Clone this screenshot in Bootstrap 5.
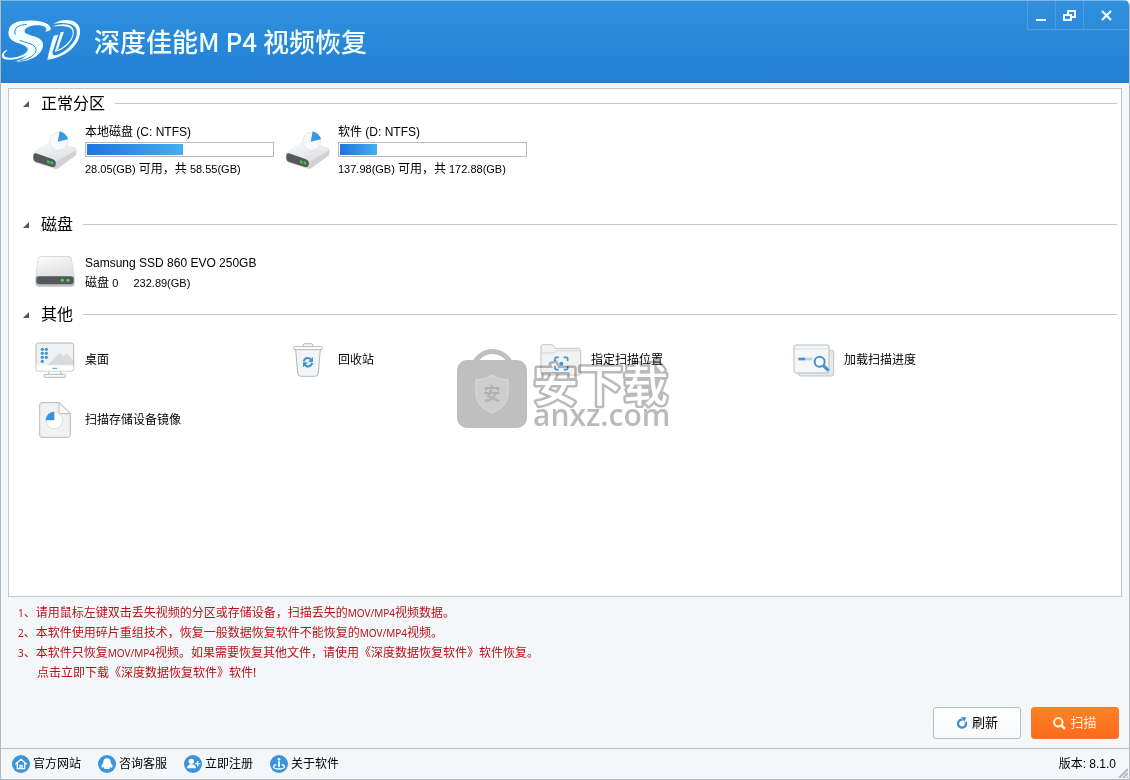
<!DOCTYPE html>
<html lang="zh-CN">
<head>
<meta charset="utf-8">
<meta name="viewport" content="width=device-width, initial-scale=1">
<title>深度佳能MP4视频恢复</title>
<link href="https://cdn.jsdelivr.net/npm/bootstrap@5.3.0/dist/css/bootstrap.min.css" rel="stylesheet">
<style>
body{font-family:"Liberation Sans","Noto Sans CJK SC",sans-serif;font-size:12px;line-height:20px;color:#000;background:#fff}
.app-window{min-height:100vh;background:#f4f7fa;border:1px solid #b4b9be;border-top:0;border-radius:0 6px 0 0;overflow:hidden}
.title-bar{height:83px;background:linear-gradient(#3090dd,#2380d5);border-top:1px solid #7ab9ea;color:#f2ffff}
.title-bar h1{font:500 26px/36px "Noto Sans CJK SC",sans-serif;padding:0 0 2px 11px}
.win-controls{height:29px;border:1px solid #4a9fe3;border-width:0 0 1px 1px}
.win-controls button{width:28px;background:none;border:0;border-right:1px solid #4a9fe3;padding:0;color:#f2ffff}
.win-controls button:last-child{width:45px;border-right:0}
.source-panel{background:#fff;border:1px solid #c3c7ca;margin:5px 7px 0;padding:4px 4px 0 13px}
.section-title{font:400 16px/18px "Noto Sans CJK SC",sans-serif;height:20px;gap:10px}
.section-title svg{margin-right:2px}
.section-title .label-text{padding-bottom:2px}
.section-title .rule{height:1px;background:#c6c6c6}
.tiles{display:grid;grid-template-columns:repeat(auto-fill,253px);padding-left:11px}
.tile{display:flex;align-items:center;background:none;border:0;padding:0;color:#000;text-align:left;height:60px}
.tile .icon-box{width:44px;margin-right:8px;flex:none;text-align:center}
.tile svg{display:block;margin:auto}
.tiles-part{padding-top:7px;margin-bottom:34px}
.tiles-disk{padding-top:9px;margin-bottom:1px}
.tiles-disk .icon-box{padding-bottom:4px}
.tiles-other{padding-top:6px}
.size-text{font-size:11px}
.size-text span{font-size:12px}
.usage{width:189px;height:15px;border:1px solid #b9b9b9;border-radius:0;background:#fff;padding:1px;margin-bottom:2px}
.usage .progress-bar{background:linear-gradient(90deg,#1f74df,#45aef0)}
.notes{padding:6px 17px 0;color:#b81414;font-family:"Noto Sans","Noto Sans CJK SC",sans-serif}
.notes span{font-size:10px}
.notes a{color:inherit;text-decoration:none;margin-left:19px}
.actions{padding:24px 10px 9px;gap:10px}
.actions .btn{width:88px;height:32px;border-radius:3px;font-size:13px;line-height:20px;padding:0;border:1px solid #b9bdc1;background:linear-gradient(#fff,#f8f9fa);color:#000;gap:4px}
.actions .btn-scan{background:linear-gradient(#ff8226,#fb6a1b);border-color:#f77a2c;color:#fff3e0}
.status-bar{border-top:1px solid #b4b9be;height:31px;padding:0 13px 0 11px;position:relative}
.status-bar a{color:#000;text-decoration:none;gap:3px}
.links{gap:17px}
.grip{position:absolute;right:1px;bottom:1px}
.watermark{position:absolute;left:50%;top:50%;width:216px;height:88px;transform:translate(-50%,-50%);opacity:.9;pointer-events:none;overflow:visible;mix-blend-mode:multiply}
</style>
</head>
<body>
<div class="app-window d-flex flex-column position-relative">
<header class="title-bar d-flex justify-content-between">
  <div class="d-flex align-items-center">
    <svg width="82" height="46" viewBox="3 3 246 138" fill="#f2ffff">
      <path d="M152 29C145 10 105 4 62 9C30 14 16 45 33 64C44 75 73 79 83 90C94 104 74 123 45 130C103 134 138 97 127 71C119 52 76 53 74 41C72 28 96 20 117 22C135 23 145 32 136 41C148 39 154 36 152 29Z"/>
      <path d="M34 61C25 40 44 20 77 20L116 13C80 5 37 7 28 31C21 51 36 69 56 74C71 78 86 86 83 97C78 109 51 122 26 119C13 118 10 112 13 106L23 96C7 96 0 118 12 123C46 132 94 111 99 94C105 73 47 77 34 61Z"/>
      <path d="M46 50C38 27 60 21 80 19M59 67C80 75 105 77 108 94C111 109 85 124 60 128" fill="none" stroke="#2a88d9" stroke-width="3"/>
      <path d="M161 53L175 50L158 101C155 113 166 115 182 106C221 85 244 43 222 24C206 11 177 15 159 17L180 8C211 2 236 10 240 35C244 78 199 118 142 125C147 100 154 75 161 53Z"/>
      <path d="M182 43L192 41L173 96C209 80 229 46 212 31C199 22 174 23 157 25C184 15 211 16 219 31C230 57 202 94 164 102Z"/>
    </svg>
    <h1 class="mb-0">深度佳能M P4 视频恢复</h1>
  </div>
  <div class="win-controls d-flex">
    <button aria-label="最小化"><svg width="16" height="14"><path d="M2 11h10" stroke="currentColor" stroke-width="2"/></svg></button>
    <button aria-label="还原"><svg width="16" height="14" fill="none" stroke="currentColor" stroke-width="2"><path d="M6 6V2h7v6h-4M2 6h7v5H2z"/></svg></button>
    <button aria-label="关闭"><svg width="16" height="14" stroke="currentColor" stroke-width="2.2"><path d="M3 2l9 9M12 2L3 11"/></svg></button>
  </div>
</header>

<main class="source-panel flex-grow-1">
  <section>
    <h2 class="section-title d-flex align-items-center mb-0"><svg width="7" height="7"><path d="M7 1v6H1z" fill="#555"/></svg><span class="label-text">正常分区</span><span class="rule flex-grow-1"></span></h2>
    <div class="tiles tiles-part">
      <button class="tile">
        <span class="icon-box"><svg width="44" height="40" viewBox="0 0 132 120">
          <defs><linearGradient id="shell" x2=".5" y2="1"><stop stop-color="#fdfdfd"/><stop offset="1" stop-color="#dfe0e2"/></linearGradient></defs>
          <path d="M4 66L48 37Q53 34 60 35L125 53Q132 56 130 65L129 76L77 114Q70 119 61 115L7 98Q0 94 1 82V73Z" fill="#d0d1d3"/>
          <path d="M4 66L48 37Q53 34 60 35L125 53Q132 57 126 63L76 92Q70 96 62 92L8 74Q0 70 4 66Z" fill="url(#shell)"/>
          <path d="M9 70Q1 68 1 78V86Q2 93 10 96L58 111Q68 113 68 104V97Q67 91 60 88Z" fill="#55585b"/>
          <path d="M42 90l8 3v9l-8-3zM53 93l8 3v9l-8-3z" fill="#43c04d"/>
          <circle cx="77" cy="34" r="27" fill="#f8f9fa" stroke="#dcdddf" stroke-width="2"/>
          <path d="M74 35L80 4Q100 10 105 28Z" fill="#3a98de"/></svg></span>
        <span>本地磁盘 (C: NTFS)
          <span class="progress usage" role="progressbar" aria-label="C 盘已用"><span class="progress-bar" style="width:52%"></span></span>
          <span class="size-text d-block">28.05(GB) <span>可用，共</span> 58.55(GB)</span></span>
      </button>
      <button class="tile">
        <span class="icon-box"><svg width="44" height="40" viewBox="0 0 132 120">
          <path d="M4 66L48 37Q53 34 60 35L125 53Q132 56 130 65L129 76L77 114Q70 119 61 115L7 98Q0 94 1 82V73Z" fill="#d0d1d3"/>
          <path d="M4 66L48 37Q53 34 60 35L125 53Q132 57 126 63L76 92Q70 96 62 92L8 74Q0 70 4 66Z" fill="url(#shell)"/>
          <path d="M9 70Q1 68 1 78V86Q2 93 10 96L58 111Q68 113 68 104V97Q67 91 60 88Z" fill="#55585b"/>
          <path d="M42 90l8 3v9l-8-3zM53 93l8 3v9l-8-3z" fill="#43c04d"/>
          <circle cx="77" cy="34" r="27" fill="#f8f9fa" stroke="#dcdddf" stroke-width="2"/>
          <path d="M74 35L80 4Q100 10 105 28Z" fill="#3a98de"/></svg></span>
        <span>软件 (D: NTFS)
          <span class="progress usage" role="progressbar" aria-label="D 盘已用"><span class="progress-bar" style="width:20%"></span></span>
          <span class="size-text d-block">137.98(GB) <span>可用，共</span> 172.88(GB)</span></span>
      </button>
    </div>
  </section>

  <section>
    <h2 class="section-title d-flex align-items-center mb-0"><svg width="7" height="7"><path d="M7 1v6H1z" fill="#555"/></svg><span class="label-text">磁盘</span><span class="rule flex-grow-1"></span></h2>
    <div class="tiles tiles-disk">
      <button class="tile">
        <span class="icon-box"><svg width="40" height="31" viewBox="0 0 120 93">
          <path d="M8 9Q10 1 20 1H99Q108 1 110 9L119 65V82Q119 92 109 92H11Q1 92 1 82V65Z" fill="#c0c2c4"/>
          <path d="M9 10Q11 2 20 2H99Q107 2 109 10L117 60Q117 63 108 61H12Q2 61 3 58Z" fill="url(#shell)"/>
          <rect x="4" y="61" width="112" height="24" rx="9" fill="#55585b"/>
          <circle cx="82" cy="73" r="5" fill="#4cd257"/><circle cx="99" cy="73" r="5" fill="#4cd257"/></svg></span>
        <span>Samsung SSD 860 EVO 250GB<span class="size-text d-flex" style="gap:15px"><span>磁盘 <small class="size-text">0</small></span>232.89(GB)</span></span>
      </button>
    </div>
  </section>

  <section>
    <h2 class="section-title d-flex align-items-center mb-0"><svg width="7" height="7"><path d="M7 1v6H1z" fill="#555"/></svg><span class="label-text">其他</span><span class="rule flex-grow-1"></span></h2>
    <div class="tiles tiles-other">
      <button class="tile">
        <span class="icon-box"><svg width="40" height="36" viewBox="0 0 120 108">
          <path d="M43 86l-3 13M76 86l3 13" stroke="#bbb" stroke-width="3"/><rect x="27" y="97" width="65" height="9" rx="4" fill="#fafafa" stroke="#b5b5b5" stroke-width="3"/>
          <rect x="3" y="3" width="113" height="84" rx="7" fill="#f0f1f2" stroke="#b9babb" stroke-width="3"/>
          <path d="M38 70L74 32 98 56 86 46Q90 34 97 36L114 54V70Z" fill="#d9dadb"/><path d="M4 70H115V80Q115 86 109 86H10Q4 86 4 80Z" fill="#fff"/>
          <path d="M52 79h15" stroke="#4a9bd5" stroke-width="3"/>
          <g fill="#4795cf"><circle cx="22" cy="22" r="5"/><circle cx="34" cy="22" r="5"/><circle cx="22" cy="34" r="5"/><circle cx="34" cy="34" r="5"/><circle cx="22" cy="46" r="5"/><circle cx="34" cy="46" r="5"/><circle cx="22" cy="58" r="5"/></g></svg></span>桌面
      </button>
      <button class="tile">
        <span class="icon-box"><svg width="30" height="34" viewBox="0 0 90 102" fill="#f3f4f5" stroke="#b5b7b9" stroke-width="3">
          <path d="M30 11V7Q30 2 36 2H54Q60 2 60 7V11"/><path d="M8 19L14 91Q15 100 24 100H67Q75 100 76 91L82 19Z"/><rect x="2" y="11" width="86" height="9" rx="4" fill="#fff"/>
          <g fill="none" stroke="#3d94d2" stroke-width="6"><path d="M32 55Q37 41 50 46L56 51M58 60Q52 74 39 69L34 64"/></g><path d="M60 42V57H45ZM30 73V58H45Z" fill="#3d94d2" stroke="none"/></svg></span>回收站
      </button>
      <button class="tile">
        <span class="icon-box"><svg width="42" height="32" viewBox="0 0 126 96">
          <path d="M3 8Q3 2 9 2H34Q39 2 42 7L46 13H115Q122 13 122 20V86Q122 93 115 93H10Q3 93 3 86Z" fill="#f1f2f3" stroke="#c1c3c5" stroke-width="3"/><path d="M4 27H39L48 20H121" fill="none" stroke="#d5d6d7" stroke-width="3"/>
          <path d="M45 51V44Q45 40 50 40H56M71 40H78Q83 40 83 45V51M83 66V72Q83 77 78 77H71M56 77H50Q45 77 45 72V66" fill="none" stroke="#3d94d2" stroke-width="5"/><circle cx="64" cy="59" r="6" fill="#3d94d2"/></svg></span>指定扫描位置
      </button>
      <button class="tile">
        <span class="icon-box"><svg width="42" height="33" viewBox="0 0 126 99">
          <rect x="17" y="19" width="105" height="77" rx="6" fill="#e6e7e8" stroke="#c1c3c5" stroke-width="3"/><rect x="3" y="3" width="105" height="84" rx="6" fill="#f5f6f7" stroke="#b9bbbd" stroke-width="3"/><path d="M4 15H107" stroke="#d1d2d3" stroke-width="2"/>
          <path d="M16 45H36" stroke="#3d94d2" stroke-width="8"/><path d="M36 45H58" stroke="#ccc" stroke-width="8"/>
          <circle cx="80" cy="53" r="15" fill="#fff" stroke="#3d94d2" stroke-width="6"/><path d="M91 65L107 80" stroke="#3d94d2" stroke-width="9"/></svg></span>加载扫描进度
      </button>
      <button class="tile">
        <span class="icon-box"><svg width="32" height="36" viewBox="0 0 96 108">
          <path d="M9 2H60L94 35V99Q94 106 87 106H9Q2 106 2 99V9Q2 2 9 2Z" fill="#f0f1f2" stroke="#b9babb" stroke-width="3"/><path d="M60 2V35H94Z" fill="#fff" stroke="#b9babb" stroke-width="3"/>
          <circle cx="46" cy="55" r="25" fill="#fff" stroke="#cfd0d1" stroke-width="2"/><path d="M46 55H20Q22 31 46 29Z" fill="#3595dc"/></svg></span>扫描存储设备镜像
      </button>
    </div>
  </section>
</main>

<div class="notes">
  <div><span>1</span>、请用鼠标左键双击丢失视频的分区或存储设备，扫描丢失的<span>MOV/MP4</span>视频数据。</div>
  <div><span>2</span>、本软件使用碎片重组技术，恢复一般数据恢复软件不能恢复的<span>MOV/MP4</span>视频。</div>
  <div><span>3</span>、本软件只恢复<span>MOV/MP4</span>视频。如果需要恢复其他文件，请使用《深度数据恢复软件》软件恢复。</div>
  <a href="#">点击立即下载《深度数据恢复软件》软件!</a>
</div>

<div class="actions d-flex justify-content-end">
  <button class="btn d-flex align-items-center justify-content-center"><svg width="12" height="12" viewBox="0 0 36 36"><path d="M20 8A12 12 0 1 0 29 15" fill="none" stroke="#3f8fcd" stroke-width="7"/><path d="M16 0L31 1 25 14Z" fill="#3f8fcd"/></svg>刷新</button>
  <button class="btn btn-scan d-flex align-items-center justify-content-center"><svg width="13" height="13" viewBox="0 0 13 13" fill="none" stroke="currentColor"><circle cx="5.3" cy="5.3" r="4.2" stroke-width="2"/><path d="M8 8l4 4" stroke-width="2.5"/></svg>扫描</button>
</div>

<footer class="status-bar d-flex align-items-center justify-content-between">
  <nav class="links d-flex">
    <a href="#" class="d-flex align-items-center"><svg width="18" height="18" viewBox="0 0 54 54"><circle cx="27" cy="27" r="27" fill="#3a94dc"/><path d="M10 28L27 13 44 28M16 25V41H38V25M24 41V31H30V41" fill="none" stroke="#fff" stroke-width="4"/></svg>官方网站</a>
    <a href="#" class="d-flex align-items-center"><svg width="18" height="18" viewBox="0 0 54 54"><circle cx="27" cy="27" r="27" fill="#3a94dc"/><path d="M27 10C17 10 16 18 16 24C8 31 10 37 13 38L18 36C20 39 18 40 20 42H34C36 40 34 39 36 36L41 38C44 37 46 31 38 24C38 18 37 10 27 10Z" fill="#fff"/></svg>咨询客服</a>
    <a href="#" class="d-flex align-items-center"><svg width="18" height="18" viewBox="0 0 54 54"><circle cx="27" cy="27" r="27" fill="#3a94dc"/><circle cx="22" cy="19" r="8" fill="#fff"/><path d="M9 40Q9 29 22 28Q36 29 36 40Z" fill="#fff"/><path d="M33 26H49M41 18V34" stroke="#fff" stroke-width="4"/></svg>立即注册</a>
    <a href="#" class="d-flex align-items-center"><svg width="18" height="18" viewBox="0 0 54 54"><circle cx="27" cy="27" r="27" fill="#3a94dc"/><circle cx="27" cy="13" r="4" fill="#fff"/><path d="M27 19V35" stroke="#fff" stroke-width="6"/><path d="M19 29C5 32 9 42 27 42S49 32 35 29" fill="none" stroke="#fff" stroke-width="4"/></svg>关于软件</a>
  </nav>
  <span>版本: 8.1.0</span>
  <svg class="grip" width="10" height="10" stroke="#b5b8bb" stroke-width="2"><path d="M1 10L10 1M5 10L10 5M9 10l1-1"/></svg>
</footer>

<svg class="watermark" viewBox="0 0 216 88">
  <path d="M17 18A20 20 0 0 1 54 18" fill="none" stroke="#b8b8b8" stroke-width="5"/>
  <rect x="0" y="14" width="70" height="68" rx="10" fill="#b8b8b8"/>
  <path d="M35 29Q42 34 51 34V48Q51 60 35 67Q19 60 19 48V34Q28 34 35 29Z" fill="#c8c8c8" stroke="#d8d8d8"/>
  <text x="35" y="54" text-anchor="middle" font-family="Noto Sans CJK SC" font-weight="700" font-size="17" fill="#a9a9a9">安</text>
  <text x="76" y="56" font-family="Noto Sans CJK SC" font-weight="500" font-size="45" fill="#fff" stroke="#b3b3b3" stroke-width="5" stroke-linejoin="round" paint-order="stroke">安下载</text>
  <text x="76" y="80" font-family="Open Sans" font-weight="600" font-size="30" fill="#b3b3b3">anxz.com</text>
</svg>
</div>
<script src="https://cdn.jsdelivr.net/npm/bootstrap@5.3.0/dist/js/bootstrap.bundle.min.js"></script>
</body>
</html>
